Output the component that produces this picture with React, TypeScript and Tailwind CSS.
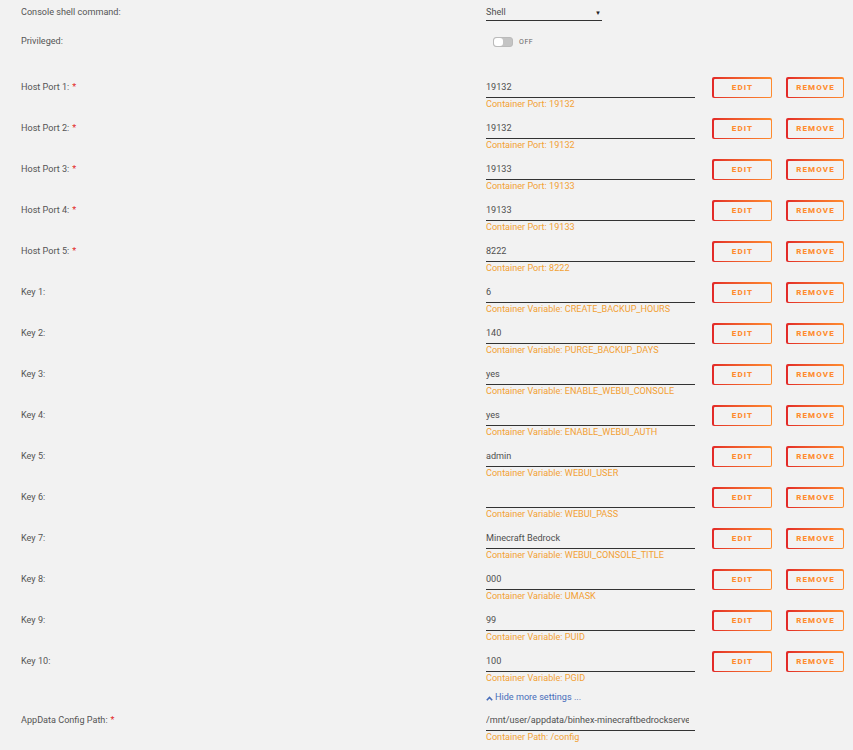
import React from "react";

type Row = { label: string; required?: boolean; value: string; hint: string };

const rows: Row[] = [
  { label: "Host Port 1:", required: true, value: "19132", hint: "Container Port: 19132" },
  { label: "Host Port 2:", required: true, value: "19132", hint: "Container Port: 19132" },
  { label: "Host Port 3:", required: true, value: "19133", hint: "Container Port: 19133" },
  { label: "Host Port 4:", required: true, value: "19133", hint: "Container Port: 19133" },
  { label: "Host Port 5:", required: true, value: "8222", hint: "Container Port: 8222" },
  { label: "Key 1:", value: "6", hint: "Container Variable: CREATE_BACKUP_HOURS" },
  { label: "Key 2:", value: "140", hint: "Container Variable: PURGE_BACKUP_DAYS" },
  { label: "Key 3:", value: "yes", hint: "Container Variable: ENABLE_WEBUI_CONSOLE" },
  { label: "Key 4:", value: "yes", hint: "Container Variable: ENABLE_WEBUI_AUTH" },
  { label: "Key 5:", value: "admin", hint: "Container Variable: WEBUI_USER" },
  { label: "Key 6:", value: "", hint: "Container Variable: WEBUI_PASS" },
  { label: "Key 7:", value: "Minecraft Bedrock", hint: "Container Variable: WEBUI_CONSOLE_TITLE" },
  { label: "Key 8:", value: "000", hint: "Container Variable: UMASK" },
  { label: "Key 9:", value: "99", hint: "Container Variable: PUID" },
  { label: "Key 10:", value: "100", hint: "Container Variable: PGID" },
];

function Label({ text, required }: { text: string; required?: boolean }) {
  return (
    <div className="w-[486px] shrink-0 pl-[21px] h-[20px] pt-[2px] flex items-center text-[9.1px] text-[#555]">
      {text}
      {required && <span className="ml-[3px] text-[#e22828]">*</span>}
    </div>
  );
}

function GradButton({ text, width }: { text: string; width: string }) {
  return (
    <div className={`${width} h-[21px] rounded-[2px] bg-gradient-to-r from-[#e22828] to-[#ff8c2f] p-[1.5px]`}>
      <div className="h-full w-full rounded-[1px] bg-[#f2f2f2] flex items-center justify-center pl-[1px] text-[8px] font-extrabold tracking-[0.14em] text-[#ff8c2f]">
        {text}
      </div>
    </div>
  );
}

function FieldRow({ row }: { row: Row }) {
  return (
    <div className="flex h-[41px]">
      <Label text={row.label} required={row.required} />
      <div className="w-[209px] shrink-0">
        <div className="h-[21px] pt-[2px] border-b border-[#333] flex items-center text-[9.1px] text-[#4f4f4f]">
          {row.value}
        </div>
        <div className="h-[13px] flex items-center text-[9.1px] text-[#f2a134]">{row.hint}</div>
      </div>
      <div className="ml-[17px] flex gap-[14px]">
        <GradButton text="EDIT" width="w-[60px]" />
        <GradButton text="REMOVE" width="w-[58px]" />
      </div>
    </div>
  );
}

export default function App() {
  return (
    <div
      className="min-h-screen w-[853px] bg-[#f2f2f2] pt-[2px]"
      style={{ fontFamily: "Roboto, 'Open Sans', sans-serif" }}
    >
      <div className="flex h-[19px]">
        <div className="w-[486px] shrink-0 pl-[21px] pt-[3px] flex items-center text-[9.1px] text-[#555]">
          Console shell command:
        </div>
        <div className="w-[116px] pt-[3px] border-b border-[#333] flex items-center justify-between text-[9.1px] text-[#4f4f4f]">
          <span>Shell</span>
          <span className="text-[6px] mr-[1px] text-[#222]">▼</span>
        </div>
      </div>

      <div className="flex h-[20px] mt-[11px] items-center">
        <div className="w-[486px] shrink-0 pl-[21px] text-[9.1px] text-[#555]">Privileged:</div>
        <div className="ml-[7px] flex items-center">
          <div className="w-[20px] h-[10px] rounded-[3px] bg-[#c4c4c4] border border-[#bbb] flex items-center">
            <div className="w-[9px] h-[8px] rounded-[3px] bg-white" />
          </div>
          <span className="ml-[6px] text-[7px] tracking-[0.08em] text-[#666]">OFF</span>
        </div>
      </div>

      <div className="mt-[25px]">
        {rows.map((r) => (
          <FieldRow key={r.label} row={r} />
        ))}
      </div>

      <div className="flex h-[12px] items-center">
        <div className="w-[486px] shrink-0" />
        <div className="flex items-center text-[9.1px] text-[#486dba]">
          <svg width="7" height="5" viewBox="0 0 7 5" className="mr-[2px]">
            <path d="M0.8 4.2 L3.5 1.4 L6.2 4.2" stroke="#486dba" strokeWidth="1.6" fill="none" />
          </svg>
          Hide more settings ...
        </div>
      </div>

      <div className="flex h-[40px] mt-[6px]">
        <Label text="AppData Config Path:" required />
        <div className="w-[209px] shrink-0">
          <div className="h-[21px] pt-[2px] border-b border-[#333] flex items-center text-[9.1px] text-[#4f4f4f]">
            <span className="block w-[203px] overflow-hidden whitespace-nowrap">
              /mnt/user/appdata/binhex-minecraftbedrockserver
            </span>
          </div>
          <div className="h-[13px] flex items-center text-[9.1px] text-[#f2a134]">Container Path: /config</div>
        </div>
      </div>
    </div>
  );
}
